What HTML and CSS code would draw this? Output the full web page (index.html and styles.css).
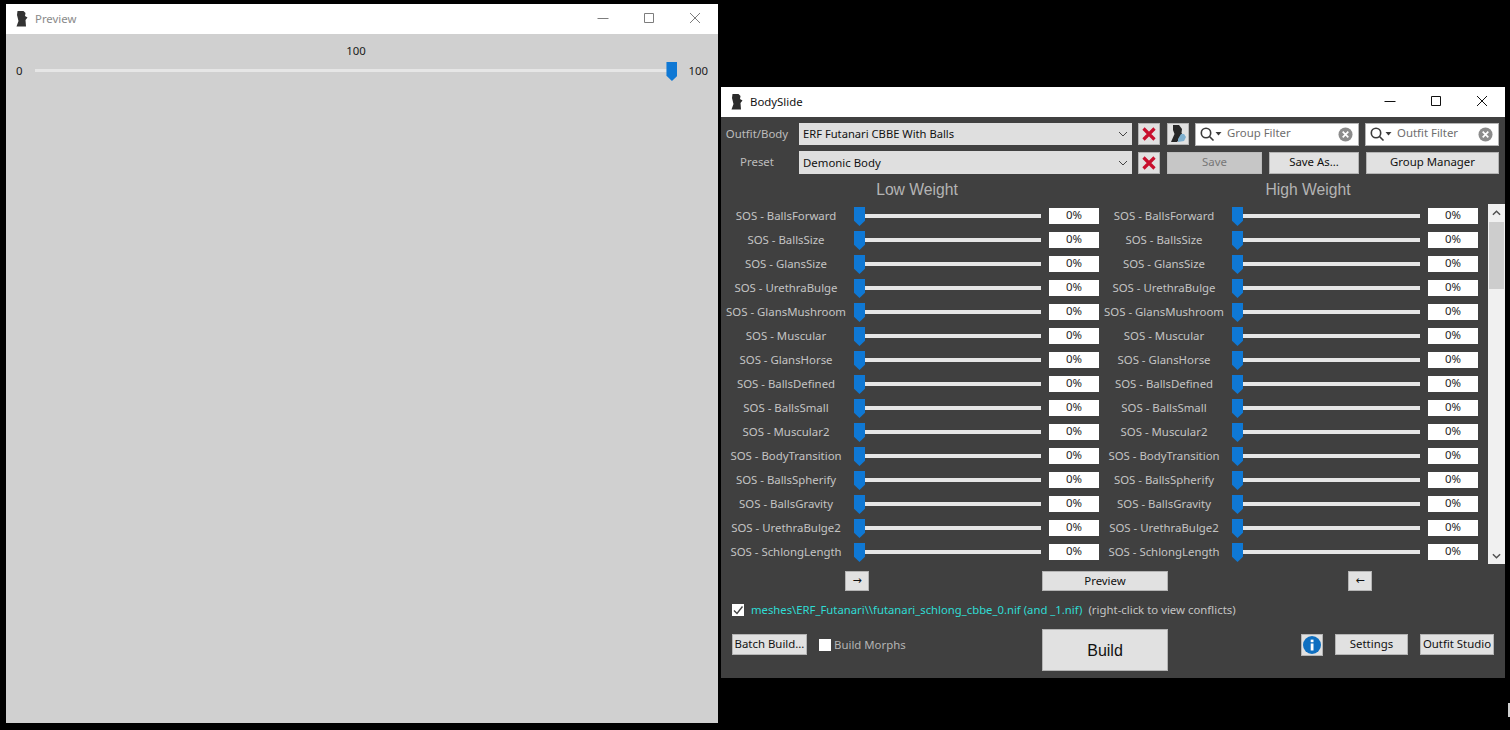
FILE: index.html
```html
<!DOCTYPE html>
<html lang="en">
<head>
<meta charset="utf-8">
<title>BodySlide</title>
<link rel="stylesheet" href="styles.css">
</head>
<body>
<section class="window preview-win">
  <header class="titlebar faded">
    <svg class="app-icon" viewBox="0 0 12 16"><path d="M1.5 0 L7.5 0 L9.5 2 L9 5 L11.5 6.5 L9.5 9 L10 15.5 L0.5 15.5 L2.5 10 L1 4 Z"/></svg>
    <span class="title">Preview</span>
    <span class="caps">
      <svg viewBox="0 0 12 12"><path d="M0.5 6.5 H11.5"/></svg>
      <svg viewBox="0 0 12 12"><path d="M1.5 1.5 H10.5 V10.5 H1.5 Z"/></svg>
      <svg viewBox="0 0 12 12"><path d="M1 1 L11 11 M11 1 L1 11"/></svg>
    </span>
  </header>
  <div class="preview-body">
    <div class="preview-value">100</div>
    <div class="preview-slider">
      <span>0</span>
      <div class="preview-track"><span class="thumb"></span></div>
      <span>100</span>
    </div>
  </div>
</section>

<section class="window main-win">
  <header class="titlebar">
    <svg class="app-icon" viewBox="0 0 12 16"><path d="M1.5 0 L7.5 0 L9.5 2 L9 5 L11.5 6.5 L9.5 9 L10 15.5 L0.5 15.5 L2.5 10 L1 4 Z"/></svg>
    <span class="title">BodySlide</span>
    <span class="caps main-caps">
      <svg viewBox="0 0 12 12"><path d="M0.5 6.5 H11.5"/></svg>
      <svg viewBox="0 0 12 12"><path d="M1.5 1.5 H10.5 V10.5 H1.5 Z"/></svg>
      <svg viewBox="0 0 12 12"><path d="M1 1 L11 11 M11 1 L1 11"/></svg>
    </span>
  </header>
  <div class="main-body">
    <div class="top-row first">
      <label class="top-label">Outfit/Body</label>
      <div class="combo"><span>ERF Futanari CBBE With Balls</span><svg viewBox="0 0 10 6"><path d="M1 1 L5 5 L9 1"/></svg></div>
      <button class="btn icon-btn"><svg viewBox="0 0 14 14"><path class="red-x" d="M1.5 1.5 L12.5 12.5 M12.5 1.5 L1.5 12.5"/></svg></button>
      <button class="btn icon-btn outfit-btn"><svg viewBox="0 0 20 20"><path d="M5 1 L11 1 L14 5 L13.5 9 L15 11 L9 18 L3 18 L6.5 10 L5 6 Z" fill="#262626"/><path d="M13 10 L16 10 L18 13 L16 17 L10 18 L10 15 Z" fill="#7fb0cf"/></svg></button>
      <div class="search filter-a">
        <svg class="mag" viewBox="0 0 22 14"><circle cx="6" cy="6" r="4.7"/><path d="M9.5 9.5 L13.5 13.5"/><path class="drop" d="M15.5 5 H21.5 L18.5 8.5 Z"/></svg>
        <span>Group Filter</span>
        <svg class="clear" viewBox="0 0 16 16"><circle cx="8" cy="8" r="7.5"/><path d="M5 5 L11 11 M11 5 L5 11"/></svg>
      </div>
      <div class="search filter-b">
        <svg class="mag" viewBox="0 0 22 14"><circle cx="6" cy="6" r="4.7"/><path d="M9.5 9.5 L13.5 13.5"/><path class="drop" d="M15.5 5 H21.5 L18.5 8.5 Z"/></svg>
        <span>Outfit Filter</span>
        <svg class="clear" viewBox="0 0 16 16"><circle cx="8" cy="8" r="7.5"/><path d="M5 5 L11 11 M11 5 L5 11"/></svg>
      </div>
    </div>
    <div class="top-row second">
      <label class="top-label">Preset</label>
      <div class="combo"><span>Demonic Body</span><svg viewBox="0 0 10 6"><path d="M1 1 L5 5 L9 1"/></svg></div>
      <button class="btn icon-btn"><svg viewBox="0 0 14 14"><path class="red-x" d="M1.5 1.5 L12.5 12.5 M12.5 1.5 L1.5 12.5"/></svg></button>
      <button class="btn save" disabled>Save</button>
      <button class="btn save-as">Save As...</button>
      <button class="btn group-mgr">Group Manager</button>
    </div>
    <div class="weights">
      <h2>Low Weight</h2>
      <h2>High Weight</h2>
    </div>
    <div class="sliders">
      <div class="rows">
        <div class="row"><span class="row-label">SOS - BallsForward</span><div class="track"><span class="thumb"></span></div><span class="row-value">0%</span><span class="row-label">SOS - BallsForward</span><div class="track"><span class="thumb"></span></div><span class="row-value">0%</span></div>
        <div class="row"><span class="row-label">SOS - BallsSize</span><div class="track"><span class="thumb"></span></div><span class="row-value">0%</span><span class="row-label">SOS - BallsSize</span><div class="track"><span class="thumb"></span></div><span class="row-value">0%</span></div>
        <div class="row"><span class="row-label">SOS - GlansSize</span><div class="track"><span class="thumb"></span></div><span class="row-value">0%</span><span class="row-label">SOS - GlansSize</span><div class="track"><span class="thumb"></span></div><span class="row-value">0%</span></div>
        <div class="row"><span class="row-label">SOS - UrethraBulge</span><div class="track"><span class="thumb"></span></div><span class="row-value">0%</span><span class="row-label">SOS - UrethraBulge</span><div class="track"><span class="thumb"></span></div><span class="row-value">0%</span></div>
        <div class="row"><span class="row-label">SOS - GlansMushroom</span><div class="track"><span class="thumb"></span></div><span class="row-value">0%</span><span class="row-label">SOS - GlansMushroom</span><div class="track"><span class="thumb"></span></div><span class="row-value">0%</span></div>
        <div class="row"><span class="row-label">SOS - Muscular</span><div class="track"><span class="thumb"></span></div><span class="row-value">0%</span><span class="row-label">SOS - Muscular</span><div class="track"><span class="thumb"></span></div><span class="row-value">0%</span></div>
        <div class="row"><span class="row-label">SOS - GlansHorse</span><div class="track"><span class="thumb"></span></div><span class="row-value">0%</span><span class="row-label">SOS - GlansHorse</span><div class="track"><span class="thumb"></span></div><span class="row-value">0%</span></div>
        <div class="row"><span class="row-label">SOS - BallsDefined</span><div class="track"><span class="thumb"></span></div><span class="row-value">0%</span><span class="row-label">SOS - BallsDefined</span><div class="track"><span class="thumb"></span></div><span class="row-value">0%</span></div>
        <div class="row"><span class="row-label">SOS - BallsSmall</span><div class="track"><span class="thumb"></span></div><span class="row-value">0%</span><span class="row-label">SOS - BallsSmall</span><div class="track"><span class="thumb"></span></div><span class="row-value">0%</span></div>
        <div class="row"><span class="row-label">SOS - Muscular2</span><div class="track"><span class="thumb"></span></div><span class="row-value">0%</span><span class="row-label">SOS - Muscular2</span><div class="track"><span class="thumb"></span></div><span class="row-value">0%</span></div>
        <div class="row"><span class="row-label">SOS - BodyTransition</span><div class="track"><span class="thumb"></span></div><span class="row-value">0%</span><span class="row-label">SOS - BodyTransition</span><div class="track"><span class="thumb"></span></div><span class="row-value">0%</span></div>
        <div class="row"><span class="row-label">SOS - BallsSpherify</span><div class="track"><span class="thumb"></span></div><span class="row-value">0%</span><span class="row-label">SOS - BallsSpherify</span><div class="track"><span class="thumb"></span></div><span class="row-value">0%</span></div>
        <div class="row"><span class="row-label">SOS - BallsGravity</span><div class="track"><span class="thumb"></span></div><span class="row-value">0%</span><span class="row-label">SOS - BallsGravity</span><div class="track"><span class="thumb"></span></div><span class="row-value">0%</span></div>
        <div class="row"><span class="row-label">SOS - UrethraBulge2</span><div class="track"><span class="thumb"></span></div><span class="row-value">0%</span><span class="row-label">SOS - UrethraBulge2</span><div class="track"><span class="thumb"></span></div><span class="row-value">0%</span></div>
        <div class="row"><span class="row-label">SOS - SchlongLength</span><div class="track"><span class="thumb"></span></div><span class="row-value">0%</span><span class="row-label">SOS - SchlongLength</span><div class="track"><span class="thumb"></span></div><span class="row-value">0%</span></div>
      </div>
      <div class="scrollbar">
        <svg viewBox="0 0 10 6"><path d="M1 5 L5 1 L9 5"/></svg>
        <div class="scroll-thumb"></div>
        <svg class="scroll-down" viewBox="0 0 10 6"><path d="M1 1 L5 5 L9 1"/></svg>
      </div>
    </div>
    <div class="action-row">
      <button class="btn arrow arrow-r">→</button>
      <button class="btn preview-btn">Preview</button>
      <button class="btn arrow arrow-l">←</button>
    </div>
    <div class="path-row">
      <span class="check checked"><svg viewBox="0 0 12 12"><path d="M2 6.5 L5 9.5 L10.5 2.5"/></svg></span>
      <span class="path">meshes\ERF_Futanari\\futanari_schlong_cbbe_0.nif (and _1.nif)</span>
      <span class="hint">(right-click to view conflicts)</span>
    </div>
    <div class="bottom-row">
      <button class="btn batch">Batch Build...</button>
      <span class="check morph-check"></span>
      <span class="morph-label">Build Morphs</span>
      <button class="btn build">Build</button>
      <button class="btn info"><svg viewBox="0 0 18 18"><circle cx="9" cy="9" r="9" fill="#0f6fc0"/><rect x="7.7" y="7.5" width="2.8" height="7" fill="#fff"/><rect x="7.7" y="3.6" width="2.8" height="2.6" fill="#fff"/></svg></button>
      <button class="btn settings">Settings</button>
      <button class="btn studio">Outfit Studio</button>
    </div>
  </div>
</section>
<span class="edge-mark"></span>
</body>
</html>
```

FILE: styles.css
```css
* { box-sizing: border-box; }
html, body { margin: 0; height: 100%; }
body {
  background: #000;
  font-family: "Noto Sans", "Open Sans", sans-serif;
  font-size: 11.4px;
  overflow: hidden;
  position: relative;
}
.window { position: absolute; display: flex; flex-direction: column; }
.preview-win { left: 6px; top: 4px; width: 712px; height: 719px; background: #d0d0d0; }
.main-win { left: 721px; top: 87px; width: 784px; height: 591px; background: #404040; }

.titlebar {
  height: 30px;
  flex: none;
  background: #fff;
  display: flex;
  align-items: center;
  color: #111;
  padding-left: 10px;
}
.app-icon { width: 12px; height: 16px; fill: #2b2b2b; flex: none; }
.title { margin-left: 7px; padding-bottom: 2px; }
.faded .title { color: #8a8a8a; margin-left: 7px; }
.faded .app-icon { fill: #333; }
.caps { margin-left: auto; display: flex; align-items: center; }
.caps svg { width: 12px; height: 12px; fill: none; stroke: #7d7d7d; stroke-width: 1; }
.faded .caps { gap: 34px; padding-right: 17px; padding-bottom: 2px; }
.main-caps { gap: 34px; padding-right: 17px; padding-bottom: 2px; }
.main-caps svg { stroke: #111; }

.preview-body { flex: 1; color: #1a1a1a; position: relative; padding-top: 8px; }
.preview-value { text-align: center; padding-right: 12px; line-height: 17px; }
.preview-slider {
  display: flex;
  align-items: center;
  height: 21px;
  margin-top: 1px;
  padding: 0 10px;
}
.preview-slider > span { padding-bottom: 1px; }
.preview-slider > span:first-child { width: 19px; }
.preview-track {
  width: 643px;
  height: 3px;
  background: #e6e6e6;
  position: relative;
  margin-right: 13px;
}
.preview-track .thumb { left: auto; right: -2px; }

.main-body { flex: 1; padding: 6px 0 0 0; display: flex; flex-direction: column; color: #c8c8c8; }
.top-row { display: flex; align-items: center; }
.top-row.first { height: 22px; }
.top-row.second { height: 23px; margin-top: 6px; }
.top-label { width: 78px; text-align: center; color: #bdbdbd; flex: none; padding-right: 6px; padding-bottom: 2px; }
.combo {
  width: 333px;
  height: 100%;
  background: #dfdfdf;
  color: #111;
  display: flex;
  align-items: center;
  padding-left: 4px;
  flex: none;
}
.combo span { padding-bottom: 2px; }
.first .combo span { font-size: 11.2px; }
.second .combo span { padding-bottom: 1px; }
.combo svg { margin-left: auto; margin-right: 4px; width: 10px; height: 6px; fill: none; stroke: #444; stroke-width: 1; }

.btn {
  font: inherit;
  color: #111;
  background: #e1e1e1;
  border: 1px solid #b4b4b4;
  padding: 0 0 2px;
  flex: none;
  display: flex;
  align-items: center;
  justify-content: center;
  white-space: nowrap;
}
.icon-btn { width: 22px; height: 22px; margin-left: 6px; padding: 0; }
.icon-btn svg { width: 14px; height: 14px; }
.red-x { stroke: #c8102e; stroke-width: 3.2; fill: none; }
.outfit-btn { margin-left: 7px; width: 22px; }
.outfit-btn svg { width: 20px; height: 20px; }

.search {
  height: 23px;
  background: #fff;
  border: 1px solid #b5b5b5;
  color: #6e6e6e;
  display: flex;
  align-items: center;
  flex: none;
  margin-left: 6px;
  padding-left: 4px;
  padding-right: 5px;
}
.filter-a { width: 164px; }
.filter-b { width: 134px; }
.mag { width: 22px; height: 14px; fill: none; stroke: #3b3b3b; stroke-width: 1.6; flex: none; }
.mag .drop { fill: #3b3b3b; stroke: none; }
.search span { margin-left: 5px; padding-bottom: 3px; }
.clear { width: 15px; height: 15px; margin-left: auto; }
.clear circle { fill: #8c8c8c; }
.clear path { stroke: #fff; stroke-width: 1.8; }

.save { width: 95px; height: 22px; margin-left: 7px; background: #c6c6c6; color: #777; border-color: #bbb; }
.save-as { width: 90px; height: 22px; margin-left: 7px; }
.group-mgr { width: 133px; height: 22px; margin-left: 7px; }

.weights { display: flex; height: 30px; align-items: center; padding-top: 2px; }
.weights h2 {
  margin: 0;
  font: 400 15.7px "Liberation Sans", Arial, sans-serif;
  color: #b4b4b4;
  text-align: center;
}
.weights h2:first-child { width: 392px; }
.weights h2:last-child { width: 390px; }

.sliders { display: flex; height: 360px; }
.rows { width: 767px; flex: none; }
.row {
  height: 24px;
  display: grid;
  grid-template-columns: 130px 198px 50px 130px 199px 50px;
  align-items: center;
}
.row-label { text-align: center; color: #c4c4c4; white-space: nowrap; padding-bottom: 2px; }
.track {
  height: 4px;
  background: #e6e6e6;
  position: relative;
  margin-left: 14px;
  margin-right: 8px;
}
.thumb {
  position: absolute;
  left: -11px;
  top: -7px;
  width: 11px;
  height: 19px;
  background: #0f78d4;
  clip-path: polygon(0 0, 100% 0, 100% 72%, 50% 100%, 0 72%);
}
.row-value {
  width: 50px;
  height: 16px;
  background: #fff;
  color: #222;
  text-align: center;
  line-height: 14px;
}
.scrollbar {
  width: 17px;
  background: #f0f0f0;
  display: flex;
  flex-direction: column;
  align-items: center;
  padding-top: 6px;
  padding-bottom: 5px;
}
.scrollbar svg { width: 9px; height: 6px; fill: none; stroke: #505050; stroke-width: 1.6; flex: none; }
.scroll-thumb { width: 15px; height: 67px; background: #cdcdcd; margin-top: 6px; }
.scroll-down { margin-top: auto; }

.action-row { display: flex; margin-top: 7px; height: 20px; }
.arrow { width: 24px; height: 20px; font: 11px "DejaVu Sans", sans-serif; padding: 0 0 1px; }
.arrow-r { margin-left: 124px; }
.preview-btn { width: 126px; height: 20px; margin-left: 173px; }
.arrow-l { margin-left: 180px; }

.path-row { display: flex; align-items: center; margin-top: 11px; height: 16px; padding-left: 11px; }
.check { width: 12px; height: 12px; background: #fff; display: block; flex: none; }
.check svg { display: block; width: 12px; height: 12px; fill: none; stroke: #444; stroke-width: 1.4; }
.path { color: #2fdcd4; margin-left: 7px; padding-bottom: 2px; font-size: 11.3px; }
.hint { color: #c4c4c4; margin-left: 6px; padding-bottom: 2px; }

.bottom-row { display: flex; align-items: flex-start; margin-top: 11px; padding-left: 11px; }
.batch { width: 75px; height: 21px; margin-top: 5px; }
.morph-check { margin-left: 12px; margin-top: 10px; width: 12px; height: 12px; }
.morph-label { margin-left: 3px; margin-top: 7px; color: #b4b4b4; width: 208px; line-height: 17px; }
.build { width: 126px; height: 42px; font: 16px "Liberation Sans", Arial, sans-serif; padding: 1px 0 0; }
.info { width: 22px; height: 22px; margin-left: 133px; margin-top: 5px; padding: 0; }
.info svg { width: 18px; height: 18px; }
.settings { width: 73px; height: 21px; margin-left: 12px; margin-top: 5px; }
.studio { width: 74px; height: 21px; margin-left: 12px; margin-top: 5px; }

.edge-mark { position: absolute; left: 1508px; top: 703px; width: 2px; height: 14px; background: #cfcfcf; }
```
